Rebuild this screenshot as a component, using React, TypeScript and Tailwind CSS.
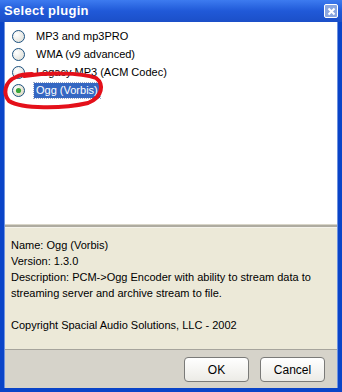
import React from "react";

const plugins = [
  "MP3 and mp3PRO",
  "WMA (v9 advanced)",
  "Legacy MP3 (ACM Codec)",
  "Ogg (Vorbis)",
];

function Radio({ checked }: { checked?: boolean }) {
  return (
    <svg width="13" height="13" viewBox="0 0 13 13" className="shrink-0">
      <defs>
        <radialGradient id={checked ? "rg1" : "rg0"} cx="0.35" cy="0.35" r="0.8">
          <stop offset="0" stopColor="#ffffff" />
          <stop offset="1" stopColor={checked ? "#d8d4b8" : "#dcdcd4"} />
        </radialGradient>
      </defs>
      <circle cx="6.5" cy="6.5" r="6" fill={`url(#${checked ? "rg1" : "rg0"})`} stroke="#1c5180" strokeWidth="1" />
      {checked && <circle cx="6.5" cy="6.5" r="2.6" fill="#3aa63a" />}
    </svg>
  );
}

export default function App() {
  return (
    <div
      className="w-[342px] h-[392px] flex flex-col bg-[#0a44c8] text-[11px] text-black relative overflow-hidden"
      style={{ fontFamily: '"Liberation Sans", Arial, sans-serif' }}
    >
      {/* title bar */}
      <div className="h-[22px] shrink-0 flex items-center justify-between pl-[4px] pr-[4px] bg-gradient-to-b from-[#3d7bf0] via-[#2059d8] to-[#1b4fc8]">
        <span className="text-white font-bold text-[13px] tracking-[0.3px]">Select plugin</span>
        <div className="w-[14px] h-[14px] rounded-[2px] border border-white bg-[#8aa6e0] flex items-center justify-center">
          <svg width="9" height="9" viewBox="0 0 9 9">
            <path d="M1.5 1.5 L7.5 7.5 M7.5 1.5 L1.5 7.5" stroke="#ffffff" strokeWidth="2" />
          </svg>
        </div>
      </div>

      {/* body */}
      <div className="flex-1 flex flex-col mx-[4px] mb-[4px] border-l border-r border-[#6d92e0]">
        {/* list */}
        <div className="h-[202px] shrink-0 bg-white pt-[5px] pl-[7px]">
          {plugins.map((p, i) => (
            <div key={p} className="h-[18px] flex items-center gap-[9px]">
              <Radio checked={i === 3} />
              <span
                className={
                  i === 3
                    ? "bg-[#3567c2] text-white px-[2px] outline outline-1 outline-dotted outline-[#9aa9c8] leading-[15px]"
                    : "px-[2px] leading-[15px]"
                }
              >
                {p}
              </span>
            </div>
          ))}
        </div>

        {/* splitter */}
        <div className="h-[4px] shrink-0 bg-[#aeaba0] border-t border-[#d8d5c8] border-b border-b-[#f4f2ea]" />

        {/* description */}
        <div className="h-[121px] shrink-0 bg-[#ece9d8] pt-[9px] pl-[6px] leading-[16px]">
          <div>Name: Ogg (Vorbis)</div>
          <div>Version: 1.3.0</div>
          <div>Description: PCM-&gt;Ogg Encoder with ability to stream data to</div>
          <div>streaming server and archive stream to file.</div>
          <div className="h-[16px]" />
          <div>Copyright Spacial Audio Solutions, LLC - 2002</div>
        </div>

        {/* buttons */}
        <div className="flex-1 bg-[#d6d3ca] border-t border-[#a6a49c] flex items-start justify-end gap-[11px] pt-[7px] pr-[12px]">
          <button className="w-[65px] h-[25px] rounded-[4px] border border-[#7a7a78] bg-gradient-to-b from-white to-[#ecebe6] text-[12px]">
            OK
          </button>
          <button className="w-[65px] h-[25px] rounded-[4px] border border-[#7a7a78] bg-gradient-to-b from-white to-[#ecebe6] text-[12px]">
            Cancel
          </button>
        </div>
      </div>

      {/* red annotation scribble */}
      <svg className="absolute left-0 top-0 pointer-events-none" width="342" height="392">
        <path
          d="M24 76 C 45 73, 80 72, 96 78 C 104 84, 103 97, 88 103 C 62 109, 22 109, 9 101 C 3 94, 4 82, 16 77 C 20 75, 26 74, 32 74"
          fill="none"
          stroke="#e4101a"
          strokeWidth="4"
          strokeLinecap="round"
        />
      </svg>
    </div>
  );
}
